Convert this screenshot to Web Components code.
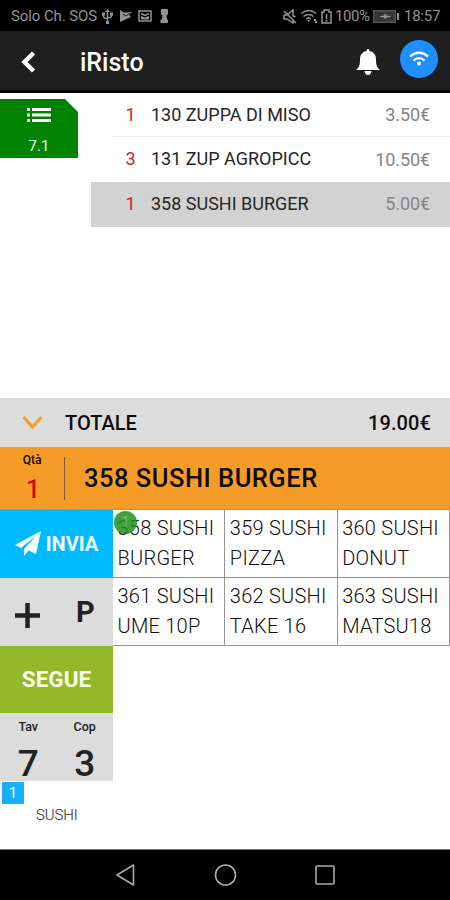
<!DOCTYPE html>
<html lang="it">
<head>
<meta charset="utf-8">
<meta name="viewport" content="width=device-width, initial-scale=1">
<title>iRisto</title>
<style>
    body {
        margin: 0;
        background: #fefefe;
        font-family: Roboto, "Noto Sans", sans-serif;
    }
</style>
</head>
<body>
<risto-app></risto-app>

<script>
const define = (name, html) => {
    customElements.define(name, class extends HTMLElement {
        constructor() {
            super();
            this.attachShadow({ mode: 'open' }).innerHTML = html;
        }
    });
};

define('status-bar', `
    <style>
        :host { display: flex; align-items: center; justify-content: space-between; height: 31px; box-sizing: border-box; padding: 1px 10px 0 11px; background: #000; color: #929292; font-size: 15px; line-height: 30px; white-space: nowrap; }
        div { display: flex; align-items: center; }
        svg { display: block; fill: none; stroke: #929292; stroke-width: 1.5; }
        .solid { fill: #929292; stroke: none; }
        .name { width: 87px; letter-spacing: -.1px; }
        .pct { width: 35px; margin-left: 2px; letter-spacing: -.4px; }
        .time { margin-left: 5px; width: 36px; letter-spacing: -.25px; }
    </style>
    <div>
        <span class="name">Solo Ch. SOS</span>
        <svg style="margin-left:4px" width="11" height="15" viewBox="0 0 11 15"><path d="M5.5 2v11M1.500 5v2.500q0 2 4 2M9.500 5v2q0 1.500-4 2"/><path class="solid" d="M5.500 0l2.500 3h-5zM0 3.500h3v3H0zM8 3.500h3v3H8zM4 12h3v3H4z"/></svg>
        <svg style="margin-left:7px" width="12" height="12" viewBox="0 0 12 12"><path class="solid" d="M0 0l4 2.500L12 2 9 5l2 2-11 5z"/><path stroke="#000" stroke-width=".8" d="M3 4l3 2 4-3"/></svg>
        <svg style="margin-left:6px" width="14" height="12" viewBox="0 0 14 12"><rect x="1" y="1" width="12" height="10"/><path d="M3 3.500l4 2 4-2"/><path class="solid" d="M3 9.500V6l4 1.500L11 6v3.500z"/></svg>
        <svg style="margin-left:8px" width="9" height="14" viewBox="0 0 9 14"><path class="solid" d="M1.500 0h6l.5 1v4L6.500 6.500 7 10.500h1V14H.5v-3.500H2l.5-4L1 5V1z"/></svg>
    </div>
    <div>
        <svg width="14" height="15" viewBox="0 0 14 15"><path d="M1 2l12 12M1 6h3l6-5v6M1 6v4h3l6 4v-3M9.500 7.500h3"/></svg>
        <svg style="margin-left:3px" width="18" height="14" viewBox="0 0 18 14"><path d="M1 4.500q8-6 15 0M3.500 7.500q5-4 10 0M6 10q2.500-2 5 0"/><path class="solid" d="M7 11h3l-1.500 2zM14 10h2v2h-2zM15 12h2v2h-2z"/></svg>
        <svg style="margin-left:3px" width="12" height="15" viewBox="0 0 12 15"><path d="M3 14H1V3h2V1h5v2h2v11H3M5.500 5v5M5.500 11v2" /></svg>
        <span class="pct">100%</span>
        <svg style="margin-left:3px" width="26" height="13" viewBox="0 0 26 13"><rect x=".75" y=".75" width="21.500" height="11.500" fill="#343434" stroke="#555"/><path class="solid" d="M7 6l4-.5 1-2 1.500 2 4 .5v1l-4 .5-1.500 2-1-2L7 7zM24 3h2v7h-2z"/></svg>
        <span class="time">18:57</span>
    </div>
`);

define('app-bar', `
    <style>
        :host { display: flex; align-items: center; height: 62px; box-sizing: border-box; padding: 0 12px 0 21px; border-bottom: 3px solid #050505; background: #1f1f1f; color: #fff; }
        svg { display: block; }
        .title { flex: 1; margin-left: 44px; padding-top: 4px; font-size: 25px; font-weight: 500; line-height: 30px; letter-spacing: 0; }
        .wifi { display: grid; place-items: center; width: 38px; height: 38px; margin: -3px 0 0 20px; border-radius: 50%; background: #1f8fff; }
    </style>
    <svg width="15" height="22" viewBox="0 0 15 22" style="margin-top:3px"><path d="M12.500 2L3.500 11l9 9" fill="none" stroke="#fff" stroke-width="4.500"/></svg>
    <span class="title"><slot></slot></span>
    <svg width="24" height="26" viewBox="0 0 24 26" style="margin-top:3px"><path fill="#fff" d="M12 0q1.500 0 1.500 2c4.500 1 6.500 4 6.500 8.500 0 6 1 8 4 10.500H0c3-2.500 4-4.500 4-10.500 0-4.500 2-7.500 6.500-8.500Q10.500 0 12 0zM8.500 22h7q-.5 4-3.500 4t-3.500-4z"/></svg>
    <span class="wifi"><svg width="20" height="16" viewBox="0 0 20 16"><g fill="none" stroke="#fff" stroke-width="2.200"><path d="M1 5.500q9-7.500 18 0M4.500 9.500q5.500-4.800 11 0"/></g><circle cx="10" cy="12.500" r="2" fill="#fff"/></svg></span>
`);

define('course-tab', `
    <style>
        :host { display: flex; flex-direction: column; align-items: center; width: 78px; height: 59px; box-sizing: border-box; margin-top: 6px; padding-top: 9px; background: #008400; clip-path: polygon(0 0, 65px 0, 100% 13px, 100% 100%, 0 100%); color: #eaffea; font-size: 15px; line-height: 18px; }
        svg { display: block; margin-bottom: 15px; }
    </style>
    <svg width="24" height="14" viewBox="0 0 24 14" fill="#fff"><path d="M0 0h3v3H0zM5 0h19v3H5zM0 5.500h3v3H0zM5 5.500h19v3H5zM0 11h3v3H0zM5 11h19v3H5z"/></svg>
    <slot></slot>
`);

define('order-row', `
    <style>
        :host { display: flex; height: 44.5px; box-sizing: border-box; padding: 0 20px 2px 31px; align-items: center; color: #262626; font-size: 18px; }
        :host([selected]) { background: #d2d2d2; }
        .qty { width: 17px; text-align: center; color: #c7262e; }
        .name { flex: 1; margin-left: 12px; }
        .price { color: #858585; padding-top: 1px; letter-spacing: -.1px; }
    </style>
    <span class="qty"><slot name="qty"></slot></span>
    <span class="name"><slot></slot></span>
    <span class="price"><slot name="price"></slot></span>
`);

define('total-bar', `
    <style>
        :host { display: flex; align-items: center; height: 49px; padding: 0 19px 0 22px; background: #dcdcdc; color: #0c0c0c; font-size: 20px; font-weight: 500; }
        svg { display: block; margin-right: 22px; }
        .sum { margin-left: auto; letter-spacing: .1px; }
    </style>
    <svg width="21" height="15" viewBox="0 0 21 15"><path d="M1.500 2l9 10 9-10" fill="none" stroke="#f59b28" stroke-width="3"/></svg>
    <slot></slot>
    <span class="sum"><slot name="sum"></slot></span>
`);

define('current-item', `
    <style>
        :host { display: flex; align-items: center; height: 63px; box-sizing: border-box; border-bottom: 1px solid #d68c20; background: #f59b28; color: #0c0c0c; }
        .qty { display: flex; flex-direction: column; align-items: center; width: 64px; font-size: 12px; font-weight: 500; line-height: 14px; }
        b { margin-top: 10px; padding-left: 2px; color: #d00c08; font-size: 25px; line-height: 26px; font-weight: 500; }
        .rule { width: 1px; height: 43px; background: #76603f; }
        .name { margin-left: 19px; font-size: 25.5px; font-weight: 500; letter-spacing: .5px; }
    </style>
    <span class="qty">Qtà<b><slot name="qty"></slot></b></span>
    <span class="rule"></span>
    <span class="name"><slot></slot></span>
`);

define('action-tile', `
    <style>
        :host { display: flex; align-items: center; justify-content: center; height: 67.75px; background: #dcdcdc; color: #222; }
        :host([kind="send"]) { background: #00baff; color: #f0ffff; font-size: 20px; font-weight: 700; }
        :host([kind="next"]) { background: #93b92a; color: #fbffed; font-size: 22.5px; font-weight: 700; }
    </style>
    <slot></slot>
`);

define('labelled-count', `
    <style>
        :host { display: flex; flex: 1; flex-direction: column; align-items: center; padding-top: 9px; font-size: 12.5px; font-weight: 500; line-height: 15px; }
        b { margin-top: 10px; font-size: 37px; line-height: 40px; font-weight: 500; }
    </style>
    <slot name="label"></slot>
    <b><slot></slot></b>
`);

define('dish-cell', `
    <style>
        :host { display: block; position: relative; box-sizing: border-box; height: 68px; padding: 3px 0 0 4.5px; border: solid #949494; border-width: 0 1px 1px 0; color: #101010; font-size: 20px; font-weight: 300; line-height: 30px; letter-spacing: .25px; background: #fefefe; }
        .badge { display: none; }
        :host([counted]) .badge { display: block; position: absolute; left: 1px; top: 1px; width: 23px; height: 23px; border-radius: 50%; background: rgba(34, 145, 34, .86); color: #8cc98c; font-size: 15px; line-height: 22px; text-align: center; }
    </style>
    <slot></slot>
    <span class="badge"><slot name="count"></slot></span>
`);

define('category-strip', `
    <style>
        :host { display: flex; align-items: flex-start; height: 68px; }
        .tag { width: 22px; height: 22px; margin: 1px 0 0 2px; background: #1aaeff; color: #e9fbff; font-size: 15px; line-height: 22px; text-align: center; }
        .name { margin: 24px 0 0 12px; color: #222; font-size: 15px; font-weight: 300; line-height: 20px; letter-spacing: -.15px; }
    </style>
    <span class="tag"><slot name="tag"></slot></span>
    <span class="name"><slot></slot></span>
`);

define('nav-bar', `
    <style>
        :host { display: grid; grid-template-columns: repeat(3, 100px); justify-content: center; align-items: center; justify-items: center; height: 51px; box-sizing: border-box; border-top: 1px solid #777; background: #000; }
        svg { display: block; fill: none; stroke: #a9a9a9; stroke-width: 1.6; stroke-linejoin: round; }
    </style>
    <svg width="22" height="24" viewBox="0 0 22 24"><path d="M19.500 2v20L3 12z"/></svg>
    <svg width="24" height="24" viewBox="0 0 24 24"><circle cx="12.500" cy="12" r="10"/></svg>
    <svg width="22" height="24" viewBox="0 0 22 24"><rect x="2" y="3" width="18" height="18" rx="1"/></svg>
`);

define('risto-app', `
    <style>
        :host { display: flex; flex-direction: column; width: 450px; height: 900px; overflow: hidden; }
        .order { display: flex; height: 305px; }
        .rows { width: 359px; margin-left: 13px; background: linear-gradient(#eee, #eee) 20px 43px / 339px 1px no-repeat; }
        .work { display: flex; height: 271px; }
        .actions { width: 113px; flex: none; }
        .dishes { display: grid; grid-template-columns: repeat(3, 112.33px); align-content: start; flex: 1; }
        .plane { display: block; margin-right: 5px; }
        .half { display: flex; flex: 1; justify-content: center; }
        .plus { padding: 7px 2px 0 0; }
        .p { color: #222; font-size: 29px; line-height: 32px; font-weight: 700; }
        /* the three fixed bars above .order add up to 93px */
        .order, total-bar, current-item, .work, category-strip, nav-bar { flex: none; }
    </style>
    <status-bar></status-bar>
    <app-bar>iRisto</app-bar>
    <div class="order">
        <course-tab>7.1</course-tab>
        <div class="rows">
            <order-row><span slot="qty">1</span>130 ZUPPA DI MISO<span slot="price">3.50€</span></order-row>
            <order-row><span slot="qty">3</span>131 ZUP AGROPICC<span slot="price">10.50€</span></order-row>
            <order-row selected><span slot="qty">1</span>358 SUSHI BURGER<span slot="price">5.00€</span></order-row>
        </div>
    </div>
    <total-bar>TOTALE<span slot="sum">19.00€</span></total-bar>
    <current-item><span slot="qty">1</span>358 SUSHI BURGER</current-item>
    <div class="work">
        <div class="actions">
            <action-tile kind="send"><svg class="plane" width="26" height="25" viewBox="0 0 26 25" fill="#f0ffff"><path d="M26 0L0 14l6 3L21 5 9 18v7l4.500-5.500L21 23z"/></svg>INVIA</action-tile>
            <action-tile>
                <span class="half plus"><svg width="25" height="25" viewBox="0 0 25 25"><path d="M12.500 0v25M0 12.500h25" stroke="#222" stroke-width="4.500"/></svg></span>
                <span class="half p">P</span>
            </action-tile>
            <action-tile kind="next">SEGUE</action-tile>
            <action-tile>
                <labelled-count><span slot="label">Tav</span>7</labelled-count>
                <labelled-count><span slot="label">Cop</span>3</labelled-count>
            </action-tile>
        </div>
        <div class="dishes">
            <dish-cell counted>358 SUSHI BURGER<span slot="count">1</span></dish-cell>
            <dish-cell>359 SUSHI PIZZA</dish-cell>
            <dish-cell>360 SUSHI DONUT</dish-cell>
            <dish-cell>361 SUSHI UME 10P</dish-cell>
            <dish-cell>362 SUSHI TAKE 16</dish-cell>
            <dish-cell>363 SUSHI MATSU18</dish-cell>
        </div>
    </div>
    <category-strip><span slot="tag">1</span>SUSHI</category-strip>
    <nav-bar></nav-bar>
`);
</script>
</body>
</html>
